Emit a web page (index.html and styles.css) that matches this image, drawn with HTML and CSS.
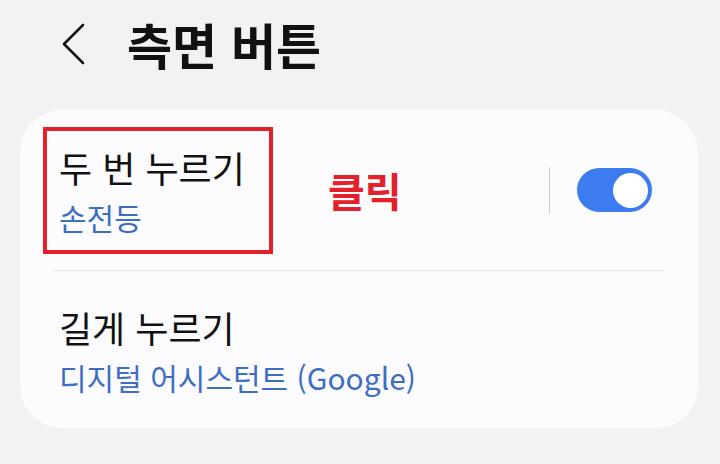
FILE: index.html
```html
<!DOCTYPE html>
<html lang="ko">
<head>
    <meta charset="UTF-8">
    <meta name="viewport" content="width=device-width, initial-scale=1.0">
    <title>측면 버튼</title>
    <link rel="stylesheet" href="styles.css">
</head>
<body>
    <header class="top-bar">
        <button class="back" aria-label="뒤로">
            <svg width="24" height="42" viewBox="0 0 24 42">
                <polyline points="21,2 2,21 21,40" fill="none" stroke="#151515" stroke-width="2.6" stroke-linecap="round" stroke-linejoin="round"/>
            </svg>
        </button>
        <h1>측면 버튼</h1>
    </header>

    <div class="card">
        <div class="row first">
            <div class="mark">
                <div class="item-title">두 번 누르기</div>
                <div class="item-sub">손전등</div>
            </div>
            <span class="click-note">클릭</span>
            <span class="sep"></span>
            <span class="toggle on"><span class="knob"></span></span>
        </div>
        <div class="row second">
            <div class="item-title">길게 누르기</div>
            <div class="item-sub">디지털 어시스턴트 (Google)</div>
        </div>
    </div>
</body>
</html>
```

FILE: styles.css
```css
body {
    margin: 0;
    background: #f2f2f4;
    font-family: "Noto Sans CJK KR", "Noto Sans", sans-serif;
    color: #111;
}

.top-bar {
    height: 88px;
    display: flex;
    align-items: center;
    padding-left: 62px;
}

.back {
    background: none;
    border: 0;
    padding: 0;
    width: 24px;
    height: 42px;
    margin-right: 41px;
    display: flex;
}

.top-bar h1 {
    margin: 0;
    font-size: 49px;
    font-weight: 700;
    line-height: 60px;
    color: #111;
}

.card {
    margin: 22px 22px 0 20px;
    background: #fcfcfe;
    border-radius: 42px;
    padding: 0 33px;
    height: 318px;
}

.row {
    display: flex;
}

.row.first {
    height: 160px;
    align-items: center;
    border-bottom: 1.5px solid #e3e3e6;
}

.mark {
    margin-left: -10px;
    width: 230px;
    height: 127px;
    box-sizing: border-box;
    border: 4px solid #e4202a;
    padding: 15px 0 0 12px;
}

.item-title {
    font-size: 36px;
    line-height: 42px;
    color: #111;
}

.item-sub {
    font-size: 30px;
    line-height: 36px;
    color: #3c6ec4;
    margin-top: 11px;
}

.click-note {
    margin-left: 55px;
    font-size: 40px;
    font-weight: 700;
    color: #e4202a;
    flex: 1;
}

.sep {
    width: 1.5px;
    height: 47px;
    background: #cbcbcd;
}

.toggle {
    margin: 0 13px 0 27px;
    width: 75px;
    height: 44px;
    border-radius: 22px;
    background: #3d7cf0;
    display: flex;
    align-items: center;
    justify-content: flex-end;
    padding-right: 4px;
    box-sizing: border-box;
}

.knob {
    width: 35px;
    height: 35px;
    border-radius: 50%;
    background: #fff;
}

.row.second {
    flex-direction: column;
    padding: 35px 0 0 6px;
}

.row.second .item-sub {
    margin-top: 11px;
}
```
